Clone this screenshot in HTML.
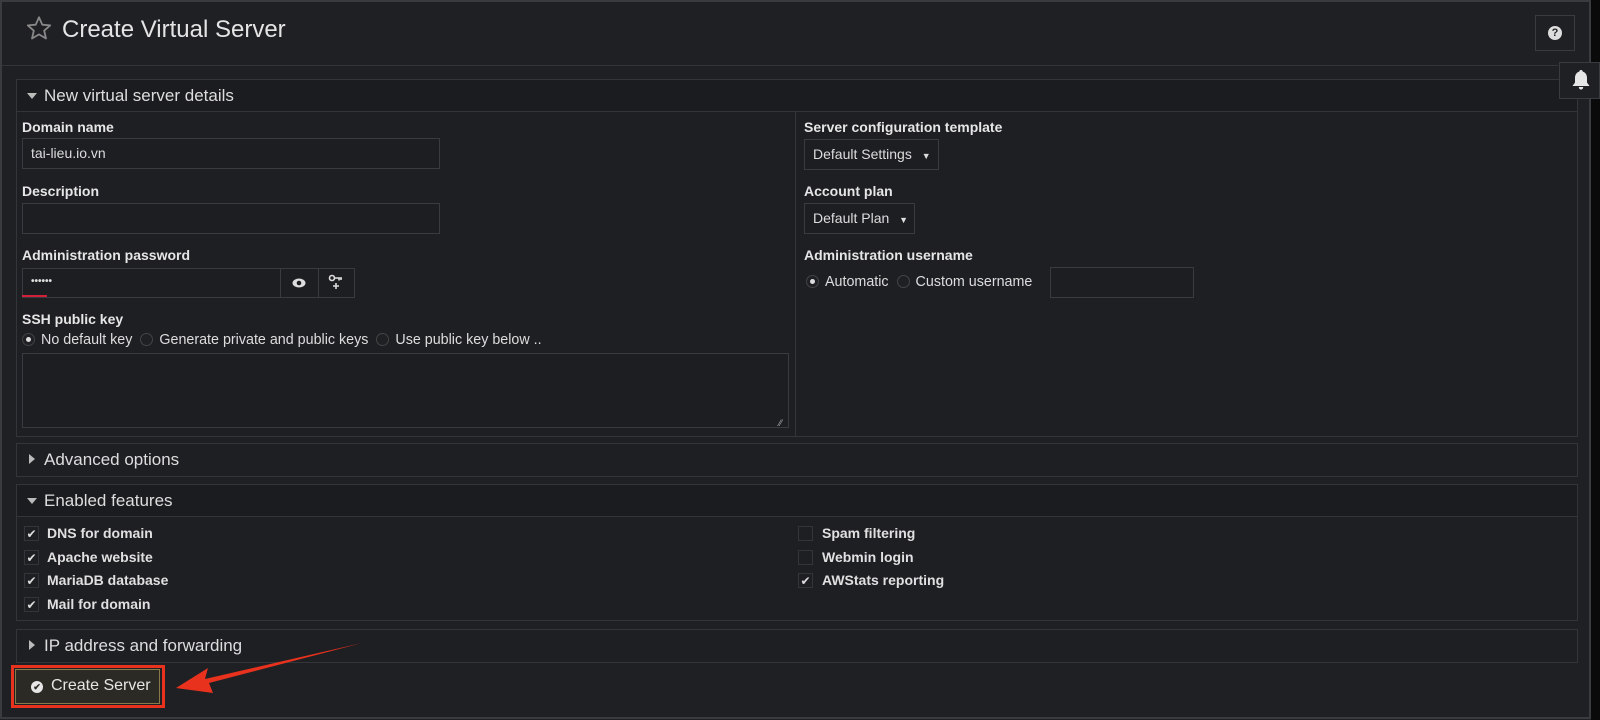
<!DOCTYPE html>
<html><head><meta charset="utf-8"><style>
*{box-sizing:border-box;margin:0;padding:0}
body{width:1600px;height:720px;background:#1f2024;font-family:"Liberation Sans",sans-serif;color:#ddd;position:relative;overflow:hidden}
.a{position:absolute}
.frame{left:0;top:0;width:1591px;height:719px;border:2px solid #3a3b3f;border-top-width:2px}
.strip{left:1591px;top:0;width:9px;height:720px;background:#0a0a0a}
.panel{border:1px solid #34353a;background:#1e1f23}
.ph{background:#1b1c1f;border-bottom:1px solid #34353a;height:32px;font-size:17px;color:#ddd;line-height:31px;padding-left:27px;position:relative}
.tri{position:absolute;left:10px;top:13px;width:0;height:0;border-left:5px solid transparent;border-right:5px solid transparent;border-top:6px solid #bbb}
.trir{position:absolute;left:12px;top:10px;width:0;height:0;border-top:5px solid transparent;border-bottom:5px solid transparent;border-left:6px solid #bbb}
.lbl{font-size:14px;font-weight:bold;color:#e6e6e6}
.inp{border:1px solid #3a3b40;background:#1d1e22;font-size:14px;color:#ddd;padding-left:8px}
.rad{display:inline-block;width:13px;height:13px;border:1px solid #444;border-radius:50%;vertical-align:-2px;margin-right:6px;position:relative;background:#1f2024}
.rad.on::after{content:"";position:absolute;left:3px;top:3px;width:5px;height:5px;border-radius:50%;background:#ddd}
.opt{font-size:14.3px;color:#ddd}
.cb{width:15px;height:15px;border:1px solid #34353a;font-size:12px;color:#ddd;text-align:center;line-height:14px}
.cl{font-size:14px;font-weight:bold;color:#e0e0e0}
</style></head><body>
<div class="a frame"></div>
<div class="a strip"></div>
<svg class="a" style="left:25px;top:15px" width="28" height="27" viewBox="0 0 24 24"><path d="M12 2l2.9 6.6 7.1.6-5.4 4.7 1.6 7-6.2-3.7-6.2 3.7 1.6-7L2 9.2l7.1-.6z" fill="none" stroke="#888" stroke-width="1.6" stroke-linejoin="round"/></svg>
<div class="a" style="left:62px;top:16px;font-size:24px;color:#e4e4e4">Create Virtual Server</div>
<div class="a" style="left:2px;top:65px;width:1556px;height:1px;background:#34353a"></div>
<div class="a" style="left:1535px;top:15px;width:40px;height:36px;border:1px solid #3a3b40"></div>
<div class="a" style="left:1548px;top:26px;width:14px;height:14px;border-radius:50%;background:#ddd;color:#1f2024;font-size:11px;font-weight:bold;text-align:center;line-height:14px">?</div>
<div class="a" style="left:1559px;top:62px;width:41px;height:37px;border:1px solid #3a3b40;background:#1f2024;z-index:4"></div>
<svg class="a" style="left:1570px;top:69px;z-index:5" width="22" height="22" viewBox="0 0 22 22"><path d="M11 1 C9.8 1 9.3 1.8 9.3 2.6 C6.3 3.4 5 6 5 9 L5 13.5 L2.5 17 L19.5 17 L17 13.5 L17 9 C17 6 15.7 3.4 12.7 2.6 C12.7 1.8 12.2 1 11 1 Z M8.8 18 C8.8 19.5 9.8 20.5 11 20.5 C12.2 20.5 13.2 19.5 13.2 18 Z" fill="#e6e6e6"/></svg>

<div class="a panel" style="left:16px;top:79px;width:1562px;height:358px">
<div class="ph"><span class="tri"></span>New virtual server details</div>
</div>
<div class="a" style="left:795px;top:111px;width:1px;height:325px;background:#34353a"></div>
<div class="a lbl" style="left:22px;top:119px">Domain name</div>
<div class="a inp" style="left:22px;top:138px;width:418px;height:31px;line-height:29px">tai-lieu.io.vn</div>
<div class="a lbl" style="left:22px;top:183px">Description</div>
<div class="a inp" style="left:22px;top:203px;width:418px;height:31px"></div>
<div class="a lbl" style="left:22px;top:247px">Administration password</div>
<div class="a inp" style="left:22px;top:268px;width:259px;height:30px;line-height:26px;font-size:10px;font-weight:bold;letter-spacing:0">••••••</div>
<div class="a" style="left:22px;top:295px;width:25px;height:2px;background:#d0203a"></div>
<div class="a inp" style="left:280px;top:268px;width:39px;height:30px;padding:0"></div>
<svg class="a" style="left:292px;top:277px" width="14" height="12" viewBox="0 0 14 12"><ellipse cx="7" cy="6" rx="6.5" ry="4.5" fill="#ddd"/><circle cx="7" cy="6" r="2.3" fill="#1d1e22"/></svg>
<div class="a inp" style="left:318px;top:268px;width:37px;height:30px;padding:0"></div>
<svg class="a" style="left:328px;top:274px" width="16" height="16" viewBox="0 0 16 16"><circle cx="4" cy="4" r="2.5" fill="none" stroke="#ddd" stroke-width="1.6"/><path d="M6.5 4H14M11 4v2.5M13 4v2M8 9v6M5 12h6" stroke="#ddd" stroke-width="1.6"/></svg>
<div class="a lbl" style="left:22px;top:311px">SSH public key</div>
<div class="a opt" style="left:22px;top:332px"><span class="rad on"></span>No default key <span class="rad" style="margin-left:4px"></span>Generate private and public keys <span class="rad" style="margin-left:4px"></span>Use public key below ..</div>
<div class="a inp" style="left:22px;top:353px;width:767px;height:75px"></div>
<div class="a" style="left:779px;top:418px;font-size:9px;color:#aaa">⁄⁄</div>

<div class="a lbl" style="left:804px;top:119px">Server configuration template</div>
<div class="a inp" style="left:804px;top:139px;width:135px;height:31px;line-height:29px">Default Settings <span style="font-size:9px;margin-left:6px">▼</span></div>
<div class="a lbl" style="left:804px;top:183px">Account plan</div>
<div class="a inp" style="left:804px;top:203px;width:111px;height:31px;line-height:29px">Default Plan <span style="font-size:9px;margin-left:6px">▼</span></div>
<div class="a lbl" style="left:804px;top:247px">Administration username</div>
<div class="a opt" style="left:806px;top:274px"><span class="rad on"></span>Automatic <span class="rad" style="margin-left:4px"></span>Custom username</div>
<div class="a inp" style="left:1050px;top:267px;width:144px;height:31px"></div>

<div class="a panel" style="left:16px;top:443px;width:1562px;height:34px"><div class="ph" style="border:0;background:#1e1f23"><span class="trir"></span>Advanced options</div></div>

<div class="a panel" style="left:16px;top:484px;width:1562px;height:137px"><div class="ph"><span class="tri"></span>Enabled features</div></div>
<div class="a cb" style="left:24px;top:526px">✔</div><div class="a cl" style="left:47px;top:525px">DNS for domain</div>
<div class="a cb" style="left:24px;top:550px">✔</div><div class="a cl" style="left:47px;top:549px">Apache website</div>
<div class="a cb" style="left:24px;top:573px">✔</div><div class="a cl" style="left:47px;top:572px">MariaDB database</div>
<div class="a cb" style="left:24px;top:597px">✔</div><div class="a cl" style="left:47px;top:596px">Mail for domain</div>
<div class="a cb" style="left:798px;top:526px"></div><div class="a cl" style="left:822px;top:525px">Spam filtering</div>
<div class="a cb" style="left:798px;top:550px"></div><div class="a cl" style="left:822px;top:549px">Webmin login</div>
<div class="a cb" style="left:798px;top:573px">✔</div><div class="a cl" style="left:822px;top:572px">AWStats reporting</div>

<div class="a panel" style="left:16px;top:629px;width:1562px;height:34px"><div class="ph" style="border:0;background:#1e1f23"><span class="trir"></span>IP address and forwarding</div></div>

<div class="a" style="left:11px;top:665px;width:154px;height:43px;border:3px solid #e8321e"></div>
<div class="a" style="left:15px;top:669px;width:145px;height:35px;border:1px solid #8a7a48;background:#2b2a25"></div>
<div class="a" style="left:31px;top:681px;width:12px;height:12px;border-radius:50%;background:#e6e6e6;color:#2b2a25;font-size:9px;font-weight:bold;text-align:center;line-height:12px">✔</div>
<div class="a" style="left:51px;top:677px;font-size:16px;color:#e6e6e6">Create Server</div>
<svg class="a" style="left:0;top:0" width="1600" height="720"><path d="M362 643 L205 679 L208 668 L176 688 L213 693 L209 683 Z" fill="#e8321e"/></svg>
</body></html>
